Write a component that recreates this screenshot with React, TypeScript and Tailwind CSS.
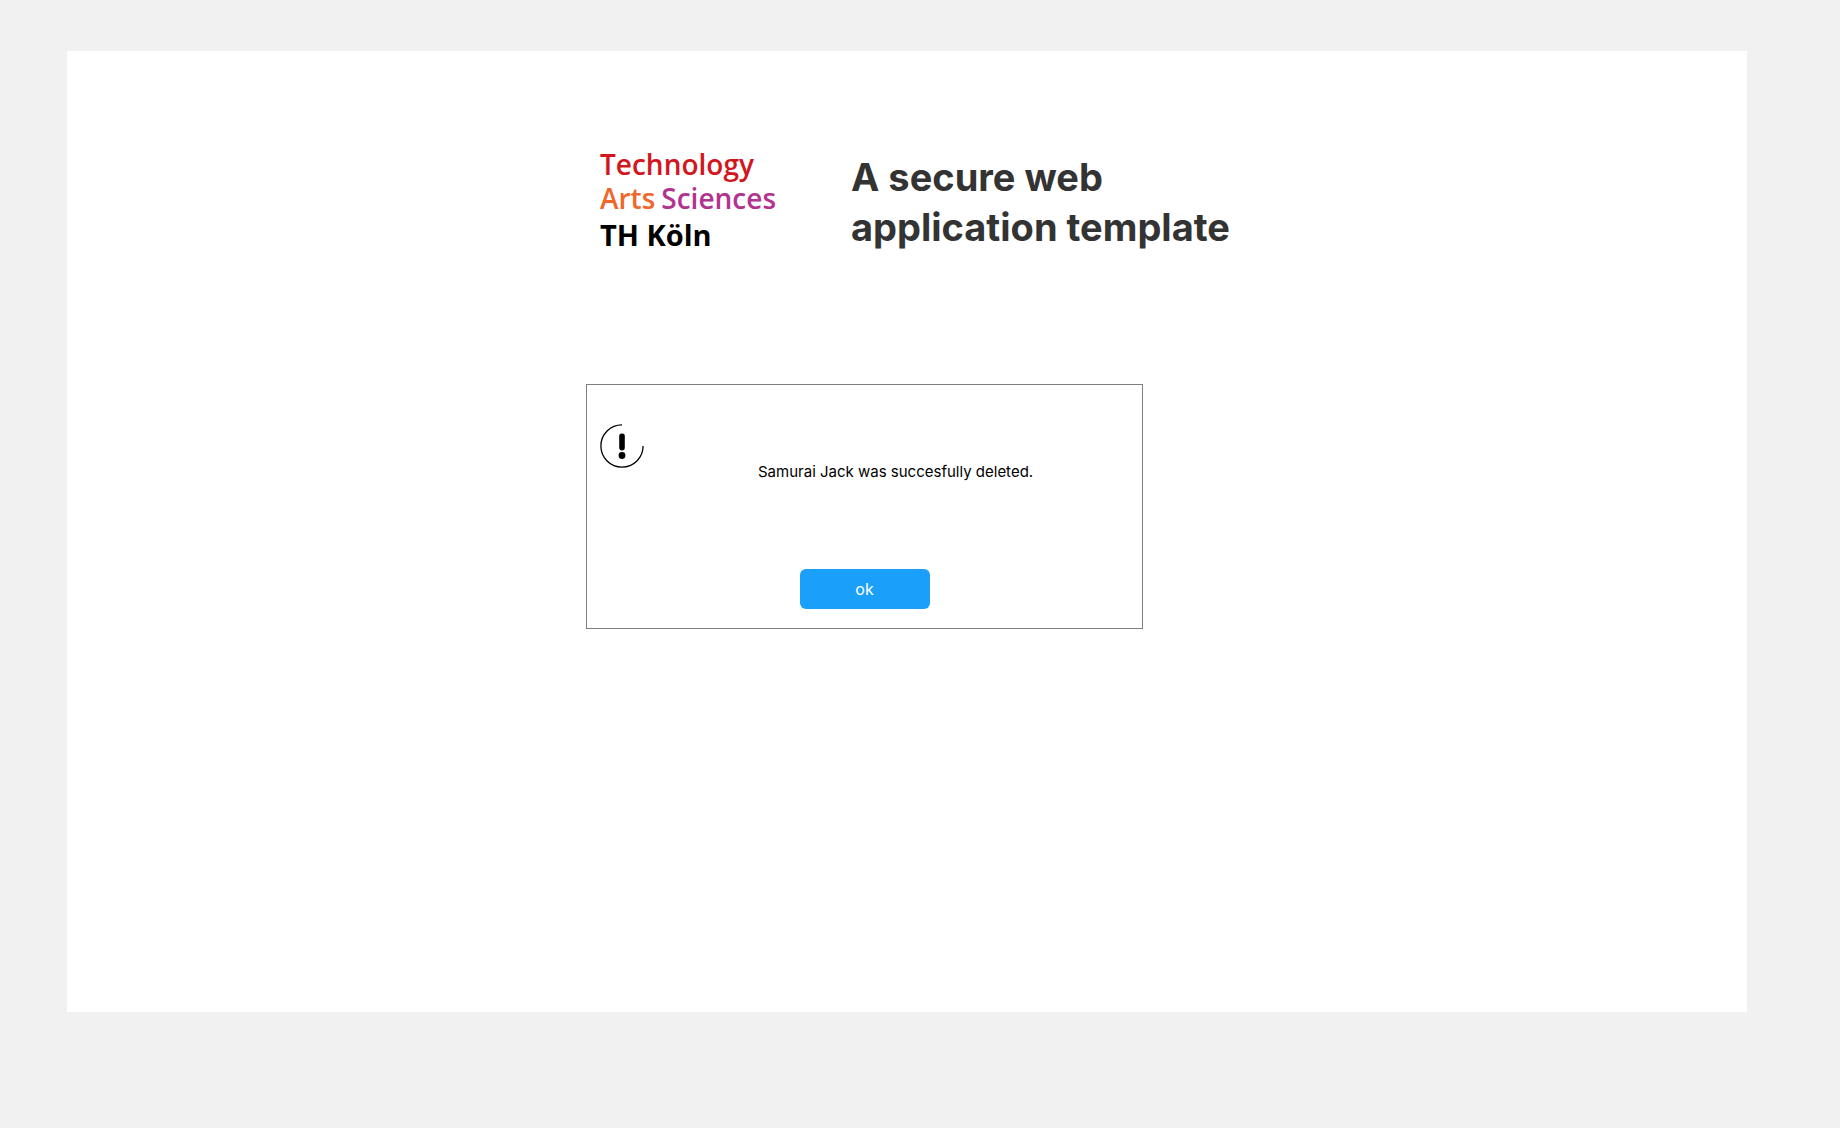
function Logo() {
  return (
    <a
      href="#"
      className="block w-[251px] shrink-0 whitespace-nowrap font-['Open_Sans',sans-serif] text-[28px] leading-[34px] font-semibold"
    >
      <span className="block text-[#d21620]">Technology</span>
      <span className="flex gap-1.5">
        <span className="text-[#ef672a]">Arts</span>
        <span className="text-[#b2338f]">Sciences</span>
      </span>
      <span className="mt-[3px] block text-[29px] font-bold text-black">TH Köln</span>
    </a>
  );
}

function NoticeIcon() {
  return (
    <svg viewBox="0 0 44 44" className="size-11 shrink-0" role="img" aria-label="Notice">
      <path
        d="M22 0.9A21.1 21.1 0 1 0 43.1 22"
        fill="none"
        stroke="#000"
        strokeWidth="1.3"
      />
      <rect x="19.2" y="9.4" width="5.6" height="17" rx="2.4" />
      <circle cx="22" cy="31.5" r="3.4" />
    </svg>
  );
}

export default function App() {
  return (
    <div className="flex min-h-screen flex-col bg-[#f1f1f1] pt-[51px] pr-[93px] pb-[116px] pl-[67px] font-['Inter',sans-serif]">
      <main className="grid flex-1 grid-cols-[519fr_557fr_604fr] content-start gap-y-[132px] bg-white pt-[96px] pb-24">
        <header className="col-span-2 col-start-2 flex items-start pl-[14px]">
          <Logo />
          <h1 className="mt-[5px] w-[400px] text-[38px] leading-[50px] font-bold text-[#333333]">
            A secure web application template
          </h1>
        </header>
        <section
          role="alertdialog"
          aria-describedby="message"
          className="col-start-2 border border-[#7f7f7f] pt-[39px] pb-[19px]"
        >
          <div className="flex pl-[13px]">
            <NoticeIcon />
            <p id="message" className="mt-[36px] ml-[114px] text-[15px] leading-6 text-black">
              Samurai Jack was succesfully deleted.
            </p>
          </div>
          <button
            type="button"
            className="mx-auto mt-[85px] block h-10 w-[130px] rounded-md bg-[#1aa0fb] text-base text-white"
          >
            ok
          </button>
        </section>
      </main>
    </div>
  );
}
